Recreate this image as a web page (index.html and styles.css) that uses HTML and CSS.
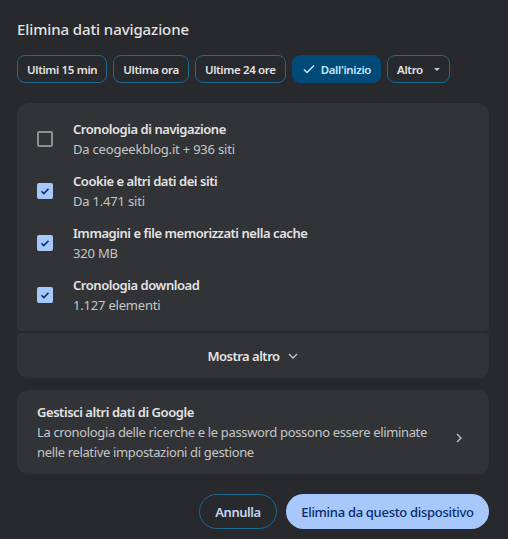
FILE: index.html
```html
<!DOCTYPE html>
<html lang="it">
<head>
<meta charset="utf-8">
<link rel="stylesheet" href="styles.css">
</head>
<body>
<div class="dialog">
  <h1 class="title">Elimina dati navigazione</h1>
  <div class="chips">
    <button class="chip">Ultimi 15 min</button>
    <button class="chip">Ultima ora</button>
    <button class="chip">Ultime 24 ore</button>
    <button class="chip selected"><svg class="chk" width="14" height="14" viewBox="0 0 14 14"><path d="M2 7.5l3 3 7-7" fill="none" stroke="#c2e7ff" stroke-width="1.4"/></svg>Dall'inizio</button>
    <button class="chip">Altro<span class="tri"></span></button>
  </div>
  <div class="card top">
    <div class="row">
      <span class="box"></span>
      <div class="txt"><div class="main">Cronologia di navigazione</div><div class="sub">Da ceogeekblog.it + 936 siti</div></div>
    </div>
    <div class="row">
      <span class="box on"><svg width="12" height="12" viewBox="0 0 12 12"><path d="M2.5 6.2l2.3 2.3 4.7-4.7" fill="none" stroke="#062e6f" stroke-width="1.6"/></svg></span>
      <div class="txt"><div class="main">Cookie e altri dati dei siti</div><div class="sub">Da 1.471 siti</div></div>
    </div>
    <div class="row">
      <span class="box on"><svg width="12" height="12" viewBox="0 0 12 12"><path d="M2.5 6.2l2.3 2.3 4.7-4.7" fill="none" stroke="#062e6f" stroke-width="1.6"/></svg></span>
      <div class="txt"><div class="main">Immagini e file memorizzati nella cache</div><div class="sub">320 MB</div></div>
    </div>
    <div class="row">
      <span class="box on"><svg width="12" height="12" viewBox="0 0 12 12"><path d="M2.5 6.2l2.3 2.3 4.7-4.7" fill="none" stroke="#062e6f" stroke-width="1.6"/></svg></span>
      <div class="txt"><div class="main">Cronologia download</div><div class="sub">1.127 elementi</div></div>
    </div>
  </div>
  <div class="card more">
    <span class="more-label">Mostra altro</span>
    <svg width="12" height="12" viewBox="0 0 12 12"><path d="M2 4l4 4 4-4" fill="none" stroke="#c4c7c5" stroke-width="1.3"/></svg>
  </div>
  <div class="card google">
    <div class="gtxt">
      <div class="main">Gestisci altri dati di Google</div>
      <div class="sub gsub">La cronologia delle ricerche e le password possono essere eliminate nelle relative impostazioni di gestione</div>
    </div>
    <svg class="chev" width="12" height="12" viewBox="0 0 12 12"><path d="M4 2l4 4-4 4" fill="none" stroke="#c4c7c5" stroke-width="1.3"/></svg>
  </div>
  <div class="actions">
    <button class="btn outline">Annulla</button>
    <button class="btn filled">Elimina da questo dispositivo</button>
  </div>
</div>
</body>
</html>
```
FILE: styles.css
```css
* { box-sizing: border-box; }
html, body { margin: 0; padding: 0; }
body {
  background: #28292c;
  font-family: "Noto Sans", "Open Sans", sans-serif;
  color: #e3e3e3;
  width: 508px;
  height: 539px;
  overflow: hidden;
}
.dialog {
  padding: 17px 19px 0 17px;
}
.title {
  margin: 0;
  font-size: 15px;
  font-weight: 500;
  line-height: 24px;
  color: #e3e3e3;
  letter-spacing: -0.1px;
}
.chips {
  display: flex;
  gap: 6px;
  margin-top: 14px;
}
.chip {
  height: 28px;
  padding: 0 9px;
  border: 1px solid #1b6a8f;
  border-radius: 8px;
  background: transparent;
  color: #e3e3e3;
  font-family: inherit;
  font-size: 11.5px;
  font-weight: 600;
  display: flex;
  align-items: center;
  gap: 5px;
  letter-spacing: -0.35px;
}
.chip.selected {
  background: #004a77;
  border-color: #004a77;
  color: #c2e7ff;
}
.tri {
  width: 0; height: 0;
  border-left: 3.5px solid transparent;
  border-right: 3.5px solid transparent;
  border-top: 3.5px solid #c4c7c5;
  margin-left: 6px;
}
.card {
  background: #323337;
}
.card.top {
  margin-top: 20px;
  border-radius: 12px 12px 4px 4px;
  padding: 10px 0 10px 20px;
  height: 228px;
}
.row {
  display: flex;
  align-items: center;
  height: 52px;
}
.box {
  width: 16px;
  height: 16px;
  border: 2px solid #8e918f;
  border-radius: 2px;
  flex: none;
  display: flex;
  align-items: center;
  justify-content: center;
}
.box.on {
  background: #a8c7fa;
  border-color: #a8c7fa;
}
.txt { margin-left: 20px; }
.main {
  font-size: 13px;
  font-weight: 600;
  line-height: 20px;
  color: #e3e3e3;
  letter-spacing: -0.45px;
}
.sub {
  font-size: 13px;
  line-height: 20px;
  color: #c4c7c5;
  letter-spacing: -0.2px;
}
.gsub { letter-spacing: -0.35px; }
.card.more {
  margin-top: 2px;
  height: 45px;
  border-radius: 4px 4px 12px 12px;
  display: flex;
  align-items: center;
  justify-content: center;
  gap: 7px;
}
.more-label {
  font-size: 13px;
  font-weight: 600;
  color: #e3e3e3;
  letter-spacing: -0.5px;
}
.card.google {
  margin-top: 12px;
  border-radius: 12px;
  height: 84px;
  padding: 12px 20px 0 20px;
  display: flex;
  align-items: flex-start;
}
.gtxt { width: 410px; }
.chev { margin-left: 6px; margin-top: 30px; }
.actions {
  display: flex;
  justify-content: flex-end;
  gap: 9px;
  margin-top: 20px;
}
.btn {
  height: 35px;
  border-radius: 18px;
  font-family: inherit;
  font-size: 13px;
  font-weight: 600;
  padding: 0 16px;
  letter-spacing: -0.45px;
}
.btn.outline {
  background: transparent;
  border: 1px solid #1b6a8f;
  color: #c4d7ed;
  width: 78px;
  padding: 0;
}
.btn.filled {
  background: #a8c7fa;
  border: none;
  color: #062e6f;
  font-weight: 500;
  width: 203px;
  padding: 0;
  letter-spacing: -0.3px;
}
```
